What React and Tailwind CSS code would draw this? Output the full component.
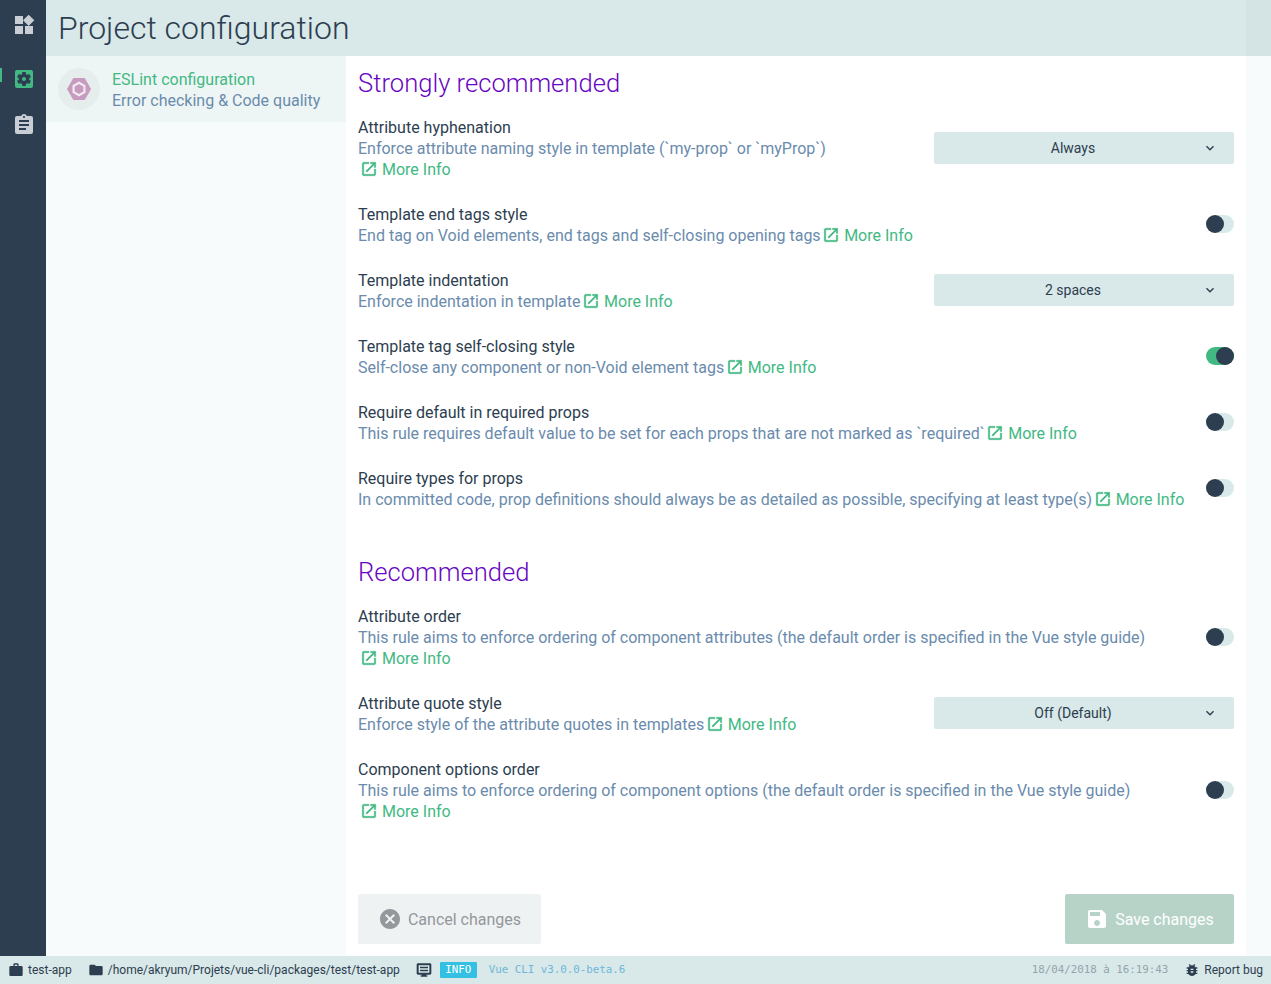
import React from 'react';

const ICONS = {
  widgets: 'M13 13v8h8v-8h-8zM3 21h8v-8H3v8zM3 3v8h8V3H3zm13.66-1.31L11 7.34 16.66 13l5.66-5.66-5.66-5.65z',
  settings: 'M12 10c-1.1 0-2 .89-2 2s.89 2 2 2 2-.89 2-2-.89-2-2-2zm7-7H5c-1.11 0-2 .9-2 2v14c0 1.1.89 2 2 2h14c1.11 0 2-.9 2-2V5c0-1.1-.89-2-2-2zm-1.75 9c0 .23-.02.46-.05.68l1.48 1.16c.13.11.17.3.08.45l-1.4 2.42c-.09.15-.27.21-.43.15l-1.74-.7c-.36.28-.76.51-1.18.69l-.26 1.85c-.03.17-.18.3-.35.3h-2.8c-.17 0-.32-.13-.35-.29l-.26-1.85c-.43-.18-.82-.41-1.18-.69l-1.74.7c-.16.06-.34 0-.43-.15l-1.4-2.42c-.09-.15-.05-.34.08-.45l1.48-1.16c-.03-.23-.05-.46-.05-.69 0-.23.02-.46.05-.68l-1.48-1.16c-.13-.11-.17-.3-.08-.45l1.4-2.42c.09-.15.27-.21.43-.15l1.74.7c.36-.28.76-.51 1.18-.69l.26-1.85c.03-.17.18-.3.35-.3h2.8c.17 0 .32.13.35.29l.26 1.85c.43.18.82.41 1.18.69l1.74-.7c.16-.06.34 0 .43.15l1.4 2.42c.09.15.05.34-.08.45l-1.48 1.16c.03.23.05.46.05.69z',
  assignment: 'M19 3h-4.18C14.4 1.84 13.3 1 12 1c-1.3 0-2.4.84-2.82 2H5c-1.1 0-2 .9-2 2v14c0 1.1.9 2 2 2h14c1.1 0 2-.9 2-2V5c0-1.1-.9-2-2-2zm-7 0c.55 0 1 .45 1 1s-.45 1-1 1-1-.45-1-1 .45-1 1-1zm2 14H7v-2h7v2zm3-4H7v-2h10v2zm0-4H7V7h10v2z',
  open: 'M19 19H5V5h7V3H5c-1.11 0-2 .9-2 2v14c0 1.1.89 2 2 2h14c1.1 0 2-.9 2-2v-7h-2v7zM14 3v2h3.59l-9.83 9.83 1.41 1.41L19 6.41V10h2V3h-7z',
  work: 'M20 6h-4V4c0-1.11-.89-2-2-2h-4c-1.11 0-2 .89-2 2v2H4c-1.11 0-1.99.89-1.99 2L2 19c0 1.11.89 2 2 2h16c1.11 0 2-.89 2-2V8c0-1.11-.89-2-2-2zm-6 0h-4V4h4v2z',
  folder: 'M10 4H4c-1.1 0-1.99.9-1.99 2L2 18c0 1.1.9 2 2 2h16c1.1 0 2-.9 2-2V8c0-1.1-.9-2-2-2h-8l-2-2z',
  logs: 'M21 2H3C1.9 2 1 2.9 1 4v13c0 1.1.9 2 2 2h6v1H7v2h10v-2h-2v-1h6c1.1 0 2-.9 2-2V4c0-1.1-.9-2-2-2zm-1 14H4V5h16v11zM6 7h12v2.5H6V7zm0 4.5h12V14H6v-2.5z',
  bug: 'M20 8h-2.81c-.45-.78-1.07-1.45-1.82-1.96L17 4.41 15.59 3l-2.17 2.17C12.96 5.06 12.49 5 12 5c-.49 0-.96.06-1.41.17L8.41 3 7 4.41l1.62 1.63C7.88 6.55 7.26 7.22 6.81 8H4v2h2.09c-.05.33-.09.66-.09 1v1H4v2h2v1c0 .34.04.67.09 1H4v2h2.81c1.04 1.79 2.97 3 5.19 3s4.15-1.21 5.19-3H20v-2h-2.09c.05-.33.09-.66.09-1v-1h2v-2h-2v-1c0-.34-.04-.67-.09-1H20V8zm-6 8h-4v-2h4v2zm0-4h-4v-2h4v2z',
  save: 'M17 3H5c-1.11 0-2 .9-2 2v14c0 1.1.89 2 2 2h14c1.1 0 2-.9 2-2V7l-4-4zm-5 16c-1.66 0-3-1.34-3-3s1.34-3 3-3 3 1.34 3 3-1.34 3-3 3zm3-10H5V5h10v4z',
  cancel: 'M12 2C6.47 2 2 6.47 2 12s4.47 10 10 10 10-4.47 10-10S17.53 2 12 2zm5 13.59L15.59 17 12 13.41 8.41 17 7 15.59 10.59 12 7 8.41 8.41 7 12 10.59 15.59 7 17 8.41 13.41 12 17 15.59z',
  chevron: 'M16.59 8.59L12 13.17 7.41 8.59 6 10l6 6 6-6z',
};

const Icon = ({ name, className }) => (
  <svg viewBox="0 0 24 24" className={className} fill="currentColor"><path d={ICONS[name]} /></svg>
);

const MoreInfo = ({ block }) => (
  <a className={`text-[#42b983] whitespace-nowrap ${block ? 'block pl-[2px]' : 'ml-[1.5px]'}`}>
    <Icon name="open" className="inline-block w-[18px] h-[18px] mr-[4px] align-[-3px] stroke-current stroke-[0.5]" />
    More Info
  </a>
);

const Select = ({ value, wrap }) => (
  <div className={`w-[300px] h-[32px] shrink-0 bg-[#d9e8e8] rounded-[2px] flex items-center justify-center relative pr-[22px] text-[14px] text-[#2c3e50] ${wrap ? '-mt-[1px]' : '-mt-[2px]'}`}>
    {value}
    <Icon name="chevron" className="absolute right-[16px] top-[8px] w-[16px] h-[16px]" />
  </div>
);

const Toggle = ({ on }) => (
  <div className={`w-[28px] h-[18px] shrink-0 -mt-[2px] rounded-full relative ${on ? 'bg-[#42b983]' : 'bg-[#d9e8e8]'}`}>
    <div className={`absolute top-0 w-[18px] h-[18px] rounded-full bg-[#2c3e50] ${on ? 'right-0' : 'left-0'}`} />
  </div>
);

const Rule = ({ name, desc, wrap, select, on }) => (
  <div className="flex items-center justify-between pr-[12px] mb-[24px]">
    <div className="leading-[21px]">
      <div className="text-[#2c3e50]">{name}</div>
      <div className="text-[#6a8bad]">
        {desc}
        {!wrap && <MoreInfo />}
      </div>
      {wrap && <MoreInfo block />}
    </div>
    {select ? <Select value={select} wrap={wrap} /> : <Toggle on={on} />}
  </div>
);

const strong = [
  { name: 'Attribute hyphenation', desc: 'Enforce attribute naming style in template (`my-prop` or `myProp`)', wrap: true, select: 'Always' },
  { name: 'Template end tags style', desc: 'End tag on Void elements, end tags and self-closing opening tags' },
  { name: 'Template indentation', desc: 'Enforce indentation in template', select: '2 spaces' },
  { name: 'Template tag self-closing style', desc: 'Self-close any component or non-Void element tags', on: true },
  { name: 'Require default in required props', desc: 'This rule requires default value to be set for each props that are not marked as `required`' },
  { name: 'Require types for props', desc: 'In committed code, prop definitions should always be as detailed as possible, specifying at least type(s)' },
];

const recommended = [
  { name: 'Attribute order', desc: 'This rule aims to enforce ordering of component attributes (the default order is specified in the Vue style guide)', wrap: true },
  { name: 'Attribute quote style', desc: 'Enforce style of the attribute quotes in templates', select: 'Off (Default)' },
  { name: 'Component options order', desc: 'This rule aims to enforce ordering of component options (the default order is specified in the Vue style guide)', wrap: true },
];

export default function App() {
  return (
    <div className="h-[984px] flex flex-col overflow-hidden bg-white text-[16px] text-[#2c3e50] font-['Roboto',sans-serif]">
      <div className="flex flex-1 min-h-0">
        {/* Sidebar */}
        <nav className="w-[46px] shrink-0 bg-[#2c3e50] relative pl-[2px]">
          <div className="h-[56px] flex items-center justify-center pb-[7px]">
            <Icon name="widgets" className="w-[24px] h-[24px] text-[#c8ced4]" />
          </div>
          <div className="h-[46px] flex items-center justify-center">
            <Icon name="settings" className="w-[24px] h-[24px] text-[#42b983]" />
          </div>
          <div className="h-[46px] flex items-center justify-center">
            <Icon name="assignment" className="w-[24px] h-[24px] text-[#c8ced4]" />
          </div>
          <div className="absolute left-0 top-[68px] w-[2px] h-[14px] bg-[#42b983]" />
        </nav>

        <div className="flex-1 flex flex-col min-w-0">
          {/* Header */}
          <header className="h-[56px] shrink-0 flex bg-[#d9e8e8]">
            <h1 className="flex-1 pl-[12px] font-light text-[32px] leading-[56px] text-[#2c3e50]">Project configuration</h1>
            <div className="w-[25px] bg-[#d4e4e5]" />
          </header>

          <div className="flex flex-1 min-h-0">
            {/* Left panel */}
            <aside className="w-[300px] shrink-0 bg-[#f7fbfb]">
              <div className="h-[66px] bg-[#eef6f5] flex items-center pl-[12px]">
                <div className="w-[42px] h-[42px] rounded-full bg-[#e6eded] flex items-center justify-center">
                  <svg viewBox="0 0 24 22" className="w-[24px] h-[22px]" fill="#c79bc0">
                    <polygon points="6.5,0.5 17.5,0.5 23.5,11 17.5,21.5 6.5,21.5 0.5,11" stroke="#c79bc0" strokeLinejoin="round" />
                    <polygon points="12,3.5 18.5,7.25 18.5,14.75 12,18.5 5.5,14.75 5.5,7.25" fill="#f3ebf2" />
                    <polygon points="12,6 16.4,8.5 16.4,13.5 12,16 7.6,13.5 7.6,8.5" />
                  </svg>
                </div>
                <div className="ml-[12px] pt-[2px] leading-[21px]">
                  <div className="text-[#42b983]">ESLint configuration</div>
                  <div className="text-[#6a8bad]">Error checking &amp; Code quality</div>
                </div>
              </div>
            </aside>

            {/* Content */}
            <main className="flex-1 min-w-0 flex flex-col pl-[12px] pt-[12px]">
              <h2 className="font-light text-[25.6px] leading-[30px] text-[#6806c3] mb-[19px]">Strongly recommended</h2>
              {strong.map(r => <Rule key={r.name} {...r} />)}
              <h2 className="font-light text-[25.6px] leading-[30px] text-[#6806c3] mt-[23px] mb-[19px]">Recommended</h2>
              {recommended.map(r => <Rule key={r.name} {...r} />)}
              <div className="mt-auto mb-[12px] pr-[12px] flex justify-between">
                <button className="h-[50px] w-[183px] bg-[#eff2f3] rounded-[2px] flex items-center justify-center text-[#94979b]">
                  <Icon name="cancel" className="w-[24px] h-[24px] mr-[6px]" />
                  <span className="pt-[2px]">Cancel changes</span>
                </button>
                <button className="h-[50px] w-[169px] bg-[#b7d3c8] rounded-[2px] flex items-center justify-center text-white">
                  <Icon name="save" className="w-[24px] h-[24px] mr-[6px]" />
                  <span className="pt-[2px]">Save changes</span>
                </button>
              </div>
            </main>

            <div className="w-[25px] shrink-0 bg-[#f7fbfb]" />
          </div>
        </div>
      </div>

      {/* Status bar */}
      <footer className="h-[28px] shrink-0 bg-[#d9e8e8] flex items-center text-[12px] text-[#2c3e50]">
        <Icon name="work" className="w-[16px] h-[16px] ml-[8px] mr-[4px]" />
        <span>test-app</span>
        <Icon name="folder" className="w-[16px] h-[16px] ml-[16px] mr-[4px]" />
        <span>/home/akryum/Projets/vue-cli/packages/test/test-app</span>
        <Icon name="logs" className="w-[16px] h-[16px] ml-[16px]" />
        <span className="ml-[8px] h-[16px] w-[37px] bg-[#34c0e3] rounded-[1px] text-white text-center font-['DejaVu_Sans_Mono',monospace] text-[10.8px] leading-[16px]">INFO</span>
        <span className="ml-[12px] pt-[1px] font-['DejaVu_Sans_Mono',monospace] text-[10.8px] text-[#6db7dc]">Vue CLI v3.0.0-beta.6</span>
        <span className="ml-auto pt-[1px] font-['DejaVu_Sans_Mono',monospace] text-[10.8px] text-[#94a4ad]">18/04/2018 à 16:19:43</span>
        <Icon name="bug" className="w-[16px] h-[16px] ml-[16px] mr-[4px]" />
        <span className="mr-[8px]">Report bug</span>
      </footer>
    </div>
  );
}
